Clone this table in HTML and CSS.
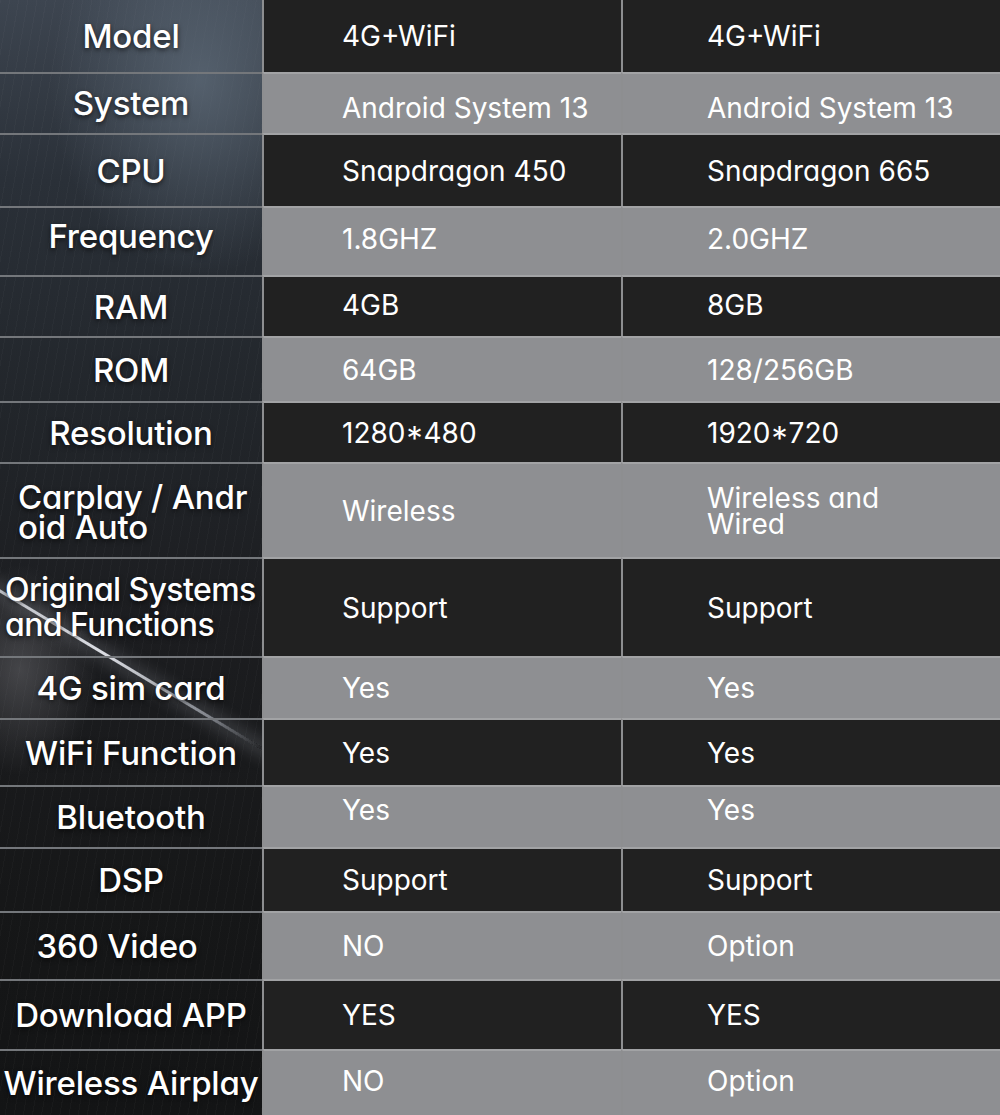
FILE: index.html
```html
<!DOCTYPE html>
<html lang="en">
<head>
<meta charset="utf-8">
<title>Specs</title>
<link rel="stylesheet" href="styles.css">
</head>
<body>
<div class="table">
  <div class="row"><div class="label">Model</div><div class="val v1">4G+WiFi</div><div class="val v2">4G+WiFi</div></div>
  <div class="row row--sys"><div class="label">System</div><div class="val v1">Android System 13</div><div class="val v2">Android System 13</div></div>
  <div class="row"><div class="label">CPU</div><div class="val v1">Snapdragon 450</div><div class="val v2">Snapdragon 665</div></div>
  <div class="row row--freq"><div class="label">Frequency</div><div class="val v1">1.8GHZ</div><div class="val v2">2.0GHZ</div></div>
  <div class="row row--ram"><div class="label">RAM</div><div class="val v1">4GB</div><div class="val v2">8GB</div></div>
  <div class="row"><div class="label">ROM</div><div class="val v1">64GB</div><div class="val v2">128/256GB</div></div>
  <div class="row"><div class="label">Resolution</div><div class="val v1">1280*480</div><div class="val v2">1920*720</div></div>
  <div class="row"><div class="label label--multi label--carplay">Carplay / Andr<br>oid Auto</div><div class="val v1">Wireless</div><div class="val v2 val--multi">Wireless and<br>Wired</div></div>
  <div class="row"><div class="label label--multi label--orig">Original Systems<br>and Functions</div><div class="val v1">Support</div><div class="val v2">Support</div></div>
  <div class="row"><div class="label">4G sim card</div><div class="val v1">Yes</div><div class="val v2">Yes</div></div>
  <div class="row"><div class="label">WiFi Function</div><div class="val v1">Yes</div><div class="val v2">Yes</div></div>
  <div class="row row--bt"><div class="label">Bluetooth</div><div class="val v1">Yes</div><div class="val v2">Yes</div></div>
  <div class="row"><div class="label">DSP</div><div class="val v1">Support</div><div class="val v2">Support</div></div>
  <div class="row"><div class="label label--360">360 Video</div><div class="val v1">NO</div><div class="val v2">Option</div></div>
  <div class="row"><div class="label">Download APP</div><div class="val v1">YES</div><div class="val v2">YES</div></div>
  <div class="row row--air"><div class="label">Wireless Airplay</div><div class="val v1">NO</div><div class="val v2">Option</div></div>
  <div class="streak"></div>
</div>
</body>
</html>
```
FILE: styles.css
```css
* { box-sizing: border-box; }
html, body { margin: 0; padding: 0; background: #1b1c1e; }
body { width: 1000px; height: 1115px; overflow: hidden; }

.table {
  position: relative;
  width: 1000px;
  height: 1115px;
  display: grid;
  grid-template-columns: 262px 359px 1fr;
  grid-template-rows: 72px 61px 73px 69px 61px 65px 61px 95px 99px 62px 67px 62px 64px 68px 70px 66px;
  overflow: hidden;
  font-family: Inter, "Noto Sans", "Liberation Sans", sans-serif;
  font-feature-settings: "cv11" 1;
  color: #fff;
}

.table::before {
  content: "";
  position: absolute;
  left: 0; top: 0;
  width: 262px; height: 100%;
  background:
    radial-gradient(ellipse 110px 150px at 20px 670px, rgba(130,130,135,0.4), transparent 70%),
    radial-gradient(ellipse 200px 260px at 200px 80px, rgba(95,108,122,0.75), transparent 75%),
    repeating-linear-gradient(100deg, rgba(255,255,255,0.025) 0 1px, transparent 1px 9px),
    linear-gradient(180deg, #3d4550 0, #2a3038 180px, #22262b 400px, #1c1d20 620px, #161718 900px, #131415 1115px);
  z-index: 0;
}

.streak {
  position: absolute;
  left: -6px;
  top: 586px;
  width: 320px;
  height: 3px;
  transform: rotate(31deg);
  transform-origin: 0 50%;
  background: linear-gradient(90deg, rgba(235,238,245,0.75), rgba(240,242,248,0.9) 40%, rgba(200,205,215,0.6) 78%, rgba(255,255,255,0) 100%);
  box-shadow: 0 0 16px 5px rgba(190,195,205,0.22);
  z-index: 0;
}

.row { display: contents; }

.label, .val {
  position: relative;
  z-index: 1;
  display: flex;
  align-items: center;
  border-top: 2px solid #a2a3a5;
}
.row:first-child .label,
.row:first-child .val { border-top: 0; }

.label {
  justify-content: center;
  text-align: center;
  font-size: 33px;
  font-weight: 500;
  letter-spacing: -0.2px;
  border-top-color: #74777b;
  text-shadow: 0 2px 5px rgba(0,0,0,0.65);
  white-space: nowrap;
}

.label--multi {
  justify-content: flex-start;
  text-align: left;
}
.label--carplay { padding-left: 18px; line-height: 30px; padding-top: 2px; }
.label--orig { padding-left: 5px; font-size: 32px; letter-spacing: -0.6px; line-height: 35px; padding-bottom: 2px; }
.label--360 { padding-right: 28px; }

.val {
  font-size: 28px;
  font-weight: 400;
  border-left: 2px solid #8d8e90;
  background: #212121;
}
.v1 { padding-left: 78px; }
.v2 { padding-left: 84px; }
.val--multi { line-height: 26px; }

.row:nth-child(even) .val { background: #8e8f92; }

.row--sys .val { padding-top: 9px; }
.row--sys .label { padding-bottom: 1px; }
.row--freq .val { padding-bottom: 6px; }
.row--freq .label { padding-bottom: 12px; }
.row--ram .val { padding-bottom: 4px; }
.row--bt .val { padding-bottom: 14px; }
.row--air .val { padding-bottom: 4px; }
```
